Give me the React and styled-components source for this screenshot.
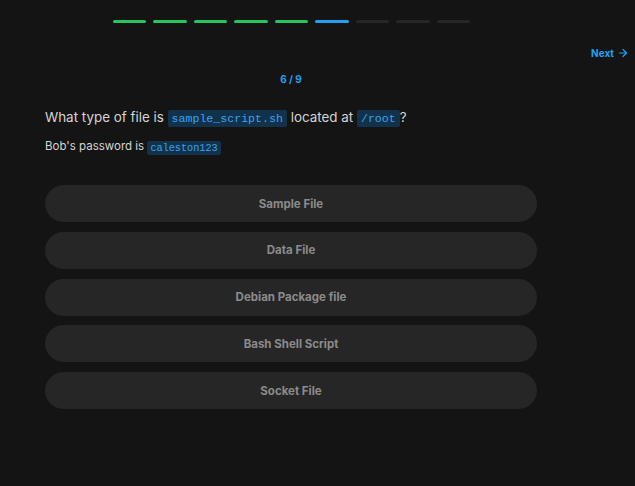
import React from "react";
import styled, { createGlobalStyle } from "styled-components";

const Global = createGlobalStyle`
  html, body { margin: 0; padding: 0; background: #141414; }
  body { font-family: Inter, "Noto Sans", sans-serif; width: 635px; height: 486px; overflow: hidden; }
`;

const Page = styled.div`
  width: 635px;
  height: 486px;
  background: #141414;
  display: flex;
  flex-direction: column;
`;

const Progress = styled.div`
  display: flex;
  justify-content: center;
  gap: 7px;
  padding-top: 20px;
  width: 583px;
`;

const Bar = styled.div`
  width: 33.5px;
  height: 3px;
  border-radius: 2px;
  background: ${(p) => (p.$state === "done" ? "#22c55e" : p.$state === "current" ? "#1ea1f1" : "#262626")};
`;

const TopRow = styled.div`
  display: flex;
  justify-content: flex-end;
  padding: 22px 6px 0 0;
  height: 16px;
`;

const NextButton = styled.button`
  background: none;
  border: none;
  color: #1ea1f1;
  font-family: Inter, sans-serif;
  font-weight: 700;
  font-size: 10px;
  display: flex;
  align-items: center;
  gap: 3px;
  padding: 0;
  cursor: pointer;
`;

const Main = styled.div`
  width: 492px;
  margin-left: 45px;
  display: flex;
  flex-direction: column;
`;

const Counter = styled.div`
  text-align: center;
  color: #1ea1f1;
  font-weight: 700;
  font-size: 10px;
  margin-top: 12px;
  height: 12px;
  line-height: 12px;
`;

const Question = styled.div`
  color: #d4d4d4;
  font-size: 13.4px;
  line-height: 20px;
  margin-top: 22px;
`;

const Note = styled.div`
  color: #d4d4d4;
  font-size: 11.5px;
  line-height: 16px;
  margin-top: 9px;
`;

const Code = styled.code`
  font-family: "Liberation Mono", monospace;
  font-size: ${(p) => p.$size}px;
  background: #11324a;
  color: #3aa3ee;
  padding: ${(p) => (p.$size > 11 ? "2px 4px" : "1.5px 3px")};
  border-radius: 2px;
`;

const Options = styled.div`
  display: flex;
  flex-direction: column;
  gap: 9.75px;
  margin-top: 29px;
`;

const Option = styled.button`
  height: 37px;
  border: none;
  border-radius: 19px;
  background: #262626;
  color: #8b8b8b;
  font-family: Inter, sans-serif;
  font-weight: 700;
  font-size: 11.5px;
  cursor: pointer;
`;

const states = ["done", "done", "done", "done", "done", "current", "todo", "todo", "todo"];
const options = ["Sample File", "Data File", "Debian Package file", "Bash Shell Script", "Socket File"];

export default function App() {
  return (
    <Page>
      <Global />
      <Progress>
        {states.map((s, i) => (
          <Bar key={i} $state={s} />
        ))}
      </Progress>
      <TopRow>
        <NextButton>
          Next
          <svg width="12" height="12" viewBox="0 0 24 24" fill="none" stroke="currentColor" strokeWidth="2.4" strokeLinecap="round" strokeLinejoin="round">
            <path d="M5 12h14" />
            <path d="M12 5l7 7-7 7" />
          </svg>
        </NextButton>
      </TopRow>
      <Main>
        <Counter>6 / 9</Counter>
        <Question>
          What type of file is <Code $size={11.6}>sample_script.sh</Code> located at <Code $size={11.6}>/root</Code>?
        </Question>
        <Note>
          Bob's password is <Code $size={10.2}>caleston123</Code>
        </Note>
        <Options>
          {options.map((o) => (
            <Option key={o}>{o}</Option>
          ))}
        </Options>
      </Main>
    </Page>
  );
}
